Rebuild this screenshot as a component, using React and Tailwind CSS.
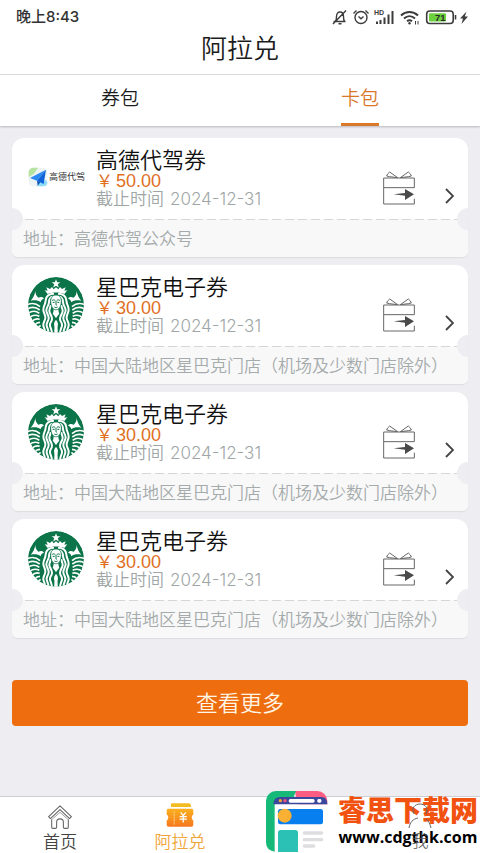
import { useState } from "react";

const tabs = ["券包", "卡包"];

const cards = [
  { id: 1, brand: "amap", title: "高德代驾券", price: "50.00", date: "2024-12-31", address: "高德代驾公众号" },
  { id: 2, brand: "siren", title: "星巴克电子券", price: "30.00", date: "2024-12-31", address: "中国大陆地区星巴克门店（机场及少数门店除外）" },
  { id: 3, brand: "siren", title: "星巴克电子券", price: "30.00", date: "2024-12-31", address: "中国大陆地区星巴克门店（机场及少数门店除外）" },
  { id: 4, brand: "siren", title: "星巴克电子券", price: "30.00", date: "2024-12-31", address: "中国大陆地区星巴克门店（机场及少数门店除外）" },
];

function StatusIcons() {
  return (
    <svg viewBox="0 0 138 20" className="w-[138px] h-5" fill="none" stroke="#3c3c3c" strokeWidth="1.4">
      {/* muted bell */}
      <path d="M1.500 14.500h12M3.500 14.300c1-1.200 1-2.500 1-4.800 0-3 1.500-4.500 3.500-4.500s3.500 1.500 3.500 4.500c0 2.300 0 3.600 1 4.800M6.500 16.800h3M14 3.500 1 17" />
      {/* alarm */}
      <circle cx="29" cy="10.500" r="6" />
      <path d="M26.500 9.500 29 11.800l2.500-2.300M21.500 6.500l3-3M36.500 6.500l-3-3" />
      {/* signal */}
      <g strokeWidth="2">
        <path d="M45 17v-2.500M48.500 17v-4M52.500 17v-6.500M56.500 17V7.500M60.500 17V4" />
      </g>
      <text x="42" y="8" fontSize="7" fontWeight="700" fill="#3c3c3c" stroke="none" className="font-['Liberation_Sans',sans-serif]">
        HD
      </text>
      {/* wifi */}
      <g strokeWidth="2">
        <path d="M69 8.500c5-4.600 12-4.600 17 0M72 11.500c3.300-3 7.700-3 11 0M75 14.200c1.600-1.300 3.400-1.300 5 0" />
      </g>
      <circle cx="77.500" cy="16.300" r="1.200" fill="#3c3c3c" stroke="none" />
      <path d="M83.500 14v3.500M86 14v3.500" strokeWidth="1" />
      {/* battery */}
      <rect x="94.700" y="4" width="26.500" height="12.500" rx="3" strokeWidth="1.600" />
      <rect x="97" y="6.200" width="17" height="8.200" rx="1" fill="#6bd13c" stroke="none" />
      <path d="M123.500 8v4.500" strokeWidth="1.600" />
      <text x="103" y="13.600" fontSize="9.500" fontWeight="700" fill="#2c2c2c" stroke="none" className="font-['Liberation_Sans',sans-serif]">
        71
      </text>
      <path d="M134.500 4.500 128 11.500h3L129.500 17l6.500-7.500h-3.200z" fill="#3c3c3c" stroke="none" />
    </svg>
  );
}

function AmapLogo() {
  return (
    <div className="flex items-center gap-px pb-1">
      <svg viewBox="0 0 60 60" className="w-5 h-5 shrink-0">
        <rect x="2" y="2" width="56" height="56" rx="14" fill="#eef3f5" />
        <path d="M2 30V16A14 14 0 0 1 16 2h14L18 20z" fill="#b5e3a0" />
        <path d="M28 58l4-14 22-4 4 6a12 12 0 0 1-12 12z" fill="#8fdcf7" />
        <path d="M54 8 6 33l21 8z" fill="#2b8bf2" />
        <path d="M54 8 27 41l20 10z" fill="#0f62d8" />
        <path d="M27 41l2 15 8-10z" fill="#0a4fb4" />
      </svg>
      <span className="text-[9px] leading-3 whitespace-nowrap text-[#333]">高德代驾</span>
    </div>
  );
}

function SirenHalf() {
  return (
    <g>
      {/* tail fin */}
      <path d="M22 42c0 9 3 15 9 20 8-3 14-2 17 3-6 1-9 5-10 11-8-6-16-7-30-5C16 63 20 54 22 42z" />
      {/* tail scales */}
      <g fill="none" stroke="#fff" strokeWidth="5">
        <path d="M-2 83c16-7 27-4 38 6" />
        <path d="M-2 96c14-8 26-6 37 3" />
        <path d="M0 109c12-8 24-8 34 0" />
        <path d="M5 121c10-8 19-8 29-3" />
        <path d="M12 133c8-8 14-9 23-6" />
        <path d="M20 144c5-6 9-8 16-8" />
        <path d="M29 153c3-4 5-6 9-7" />
      </g>
      {/* hair */}
      <g fill="none" stroke="#fff" strokeWidth="6">
        <path d="M78 50C60 50 54 58 53 70c0 12-7 17-7 28 0 10 7 15 6 25s-7 13-6 22 5 10 6 25" />
        <path d="M74 58c-8 3-11 8-11 17 0 11-8 15-8 25s8 14 7 24-7 12-6 21 5 10 6 25" />
        <path d="M68 84c0 8-4 11-4 18 0 9 8 13 8 23s-7 11-6 20 5 10 6 25" />
      </g>
    </g>
  );
}

function SirenLogo() {
  return (
    <svg viewBox="0 0 168 168" className="mb-0.5 w-14 h-14">
      <clipPath id="siren-clip">
        <circle cx="84" cy="84" r="84" />
      </clipPath>
      <g clipPath="url(#siren-clip)" fill="#fff">
        <circle cx="84" cy="84" r="84" fill="#0b7449" />
        <path d="M84 7l3.500 9H97l-7.500 6 3 9.500-8.500-5.500-8.500 5.500 3-9.500-7.500-6h9.500z" />
        <path d="M84 31l7 6 5-7 6 6 11-5-4 10 9-1-9 11c-16-6-34-6-50 0l-9-11 9 1-4-10 11 5 6-6 5 7z" />
        <SirenHalf />
        <g transform="translate(168 0) scale(-1 1)">
          <SirenHalf />
        </g>
        <path d="M84 54c11 0 16 7 16 19 0 14-7 26-16 26s-16-12-16-26c0-12 5-19 16-19z" stroke="#0b7449" strokeWidth="2.500" />
        <path d="M77 97c4 4 10 4 14 0 0 7 2 10 3 14-4 3-7 8-10 13-3-5-6-10-10-13 1-4 3-7 3-14z" />
        <path d="M84 128c6 7 7 13 5 20-1 8 1 13 0 20H79c-1-7 1-12 0-20-2-7-1-13 5-20z" />
        <g fill="none" stroke="#0b7449" strokeWidth="3">
          <path d="M72 71c3-3 6-3 9-1M87 70c3-2 6-2 9 1M74 76h6M88 76h6M84 70v11c-1 3 0 3 3 3M79 90c3 2 7 2 10 0" />
        </g>
      </g>
    </svg>
  );
}

function GiftIcon() {
  return (
    <svg viewBox="0 0 96 102" className="w-8 h-[34px]" fill="none" stroke="#666" strokeWidth="3">
      <path d="M2 21h92v29H2zM2 50v49h92V83" />
      <path d="M44 20 20 3q-8 6-9 12l8 2zM52 20 76 3q8 6 9 12l-8 2z" strokeWidth="3" strokeLinejoin="round" />
      <path d="M32 70l34-4V54l27 16-27 17V74z" fill="#4a4a4a" stroke="none" />
    </svg>
  );
}

function CouponCard({ card }) {
  return (
    <li className="relative overflow-hidden rounded-t-xl rounded-b-md bg-white shadow-[0_1px_1px_#dcdcdf]">
      <div className="flex h-[81px] pl-4 pr-3.5">
        <div className="flex w-[68px] shrink-0 items-center">
          {card.brand === "amap" ? <AmapLogo /> : <SirenLogo />}
        </div>
        <div className="min-w-0 flex-1 pt-2.5">
          <h2 className="text-[22px] leading-6 font-[350] text-[#111]">{card.title}</h2>
          <p className="flex leading-[18px] text-[#e0701f]">
            <span className="w-5 text-[17px]">￥</span>
            <span className="font-['Liberation_Sans',sans-serif] text-lg leading-[18px]">{card.price}</span>
          </p>
          <p className="flex gap-1.5 text-[17px] leading-[18px] text-[#a0a6a6]">
            <span className="font-[350]">截止时间</span>
            <time className="font-light">{card.date}</time>
          </p>
        </div>
        <div className="flex items-end gap-[30px] pb-3.5">
          <button type="button" aria-label="赠送">
            <GiftIcon />
          </button>
          <button type="button" aria-label="详情">
            <svg viewBox="0 0 9 18" className="w-[9px] h-[18px]" fill="none" stroke="#444" strokeWidth="1.800">
              <path d="M1 2l7 7-7 7" />
            </svg>
          </button>
        </div>
      </div>
      <div className="h-px bg-[repeating-linear-gradient(90deg,#d6d6d8_0_9px,#f8f8f9_9px_13px)]" />
      <p className="h-[37px] bg-[#f8f8f9] pl-[11px] text-[17px] leading-[38px] font-[350] whitespace-nowrap text-[#a5abab]">
        地址：{card.address}
      </p>
      <span className="absolute -left-[11px] top-[70px] h-[22px] w-[22px] rounded-full bg-[#eeedf2]" />
      <span className="absolute -right-[11px] top-[70px] h-[22px] w-[22px] rounded-full bg-[#eeedf2]" />
    </li>
  );
}

function HomeIcon() {
  return (
    <svg viewBox="0 0 78 78" className="h-6 w-6" fill="none" stroke="#666" strokeWidth="3.500" strokeLinejoin="round">
      <path d="M39 3 2 38l6 6 31-29 31 29 6-6z" />
      <path d="M12 46v26q0 4 4 4h8q4 0 4-4V56q0-11 11-11t11 11v16q0 4 4 4h8q4 0 4-4V46" />
      <path d="M39 24 14 46M39 24l25 22" strokeWidth="2" />
    </svg>
  );
}

function TicketIcon() {
  return (
    <svg viewBox="0 0 84 74" className="h-6 w-7">
      <defs>
        <linearGradient id="ticket" x1="0" y1="0" x2="0" y2="1">
          <stop offset="0" stopColor="#fbb01e" />
          <stop offset="1" stopColor="#f5791f" />
        </linearGradient>
      </defs>
      <path d="M18 1h50q8 0 8 8v3H14V5q0-4 4-4z" fill="#f3bd22" />
      <path d="M6 18h72q5 0 5 5v13q-5 2-5 9t5 9v13q0 6-6 6H7q-6 0-6-6V54q5-2 5-9t-5-9V23q0-5 5-5z" fill="url(#ticket)" />
      <path d="M24 26v42" stroke="#ffe3a6" strokeWidth="2.500" strokeDasharray="6 2" />
      <path d="M44 29l8 10 8-10M52 39v21M41 42h22M41 50h22" stroke="#fff" strokeWidth="4" fill="none" />
    </svg>
  );
}

function PersonIcon() {
  return (
    <svg viewBox="0 0 24 26" className="h-[26px] w-6" fill="none" stroke="#666" strokeWidth="1">
      <path d="M6 11C3 5 7 1 12 1s9 4 6 10M1 25c1-6 4-9 9-10M23 25c-1-4-2-7-5-9" />
    </svg>
  );
}

function SiteMark() {
  return (
    <div className="absolute right-0 bottom-0 flex items-end gap-2.5 pr-0.5">
      <svg viewBox="0 0 186 186" className="h-[62px] w-[62px]">
        <path d="M22 186V40h162v124q0 22-22 22z" fill="#fff" />
        <path d="M86 0h68a30 30 0 0 1 30 30v10H96z" fill="#fb5d82" />
        <path d="M0 30A30 30 0 0 1 30 0h60l-8 20L26 40v142Q0 178 0 154z" fill="#17b978" />
        <path d="M22 40q0-22 22-22h122q18 0 18 22z" fill="#39489c" />
        <circle cx="43" cy="29" r="5" fill="#f3a52d" />
        <circle cx="57" cy="29" r="5" fill="#f0557d" />
        <rect x="68" y="24" width="78" height="11" rx="5" fill="#fff" />
        <rect x="154" y="24" width="12" height="11" rx="4" fill="#fff" />
        <rect x="36" y="54" width="135" height="46" rx="7" fill="#087fee" />
        <circle cx="56" cy="74" r="21" fill="#fab033" />
        <path d="M44 117h44q8 0 8 8v58H36v-58q0-8 8-8z" fill="#2cc1b5" />
        <path d="M115 126h52M115 146h52M115 165h28" stroke="#dedee0" strokeWidth="10" strokeLinecap="round" />
      </svg>
      <div className="flex flex-col items-center">
        <strong className="text-[28px] leading-8 font-black text-[#f2520f]">睿思下载网</strong>
        <span className="pb-1.5 font-['Open_Sans',sans-serif] text-base leading-5 font-bold text-black">www.cdgthk.com</span>
      </div>
    </div>
  );
}

function App() {
  const [activeTab, setActiveTab] = useState("卡包");

  return (
    <div className="flex min-h-screen flex-col bg-[#eeedf2] font-['Inter','Noto_Sans_CJK_SC',sans-serif] text-[#1c1c1c]">
      <header className="bg-white shadow-[0_1px_2px_#b8b8bc]">
        <div className="flex h-[34px] items-center justify-between pl-4 pr-2.5">
          <span className="text-[15px] font-medium text-[#333]">晚上8:43</span>
          <StatusIcons />
        </div>
        <h1 className="pb-2.5 text-center text-[26px] leading-[30px] font-[350]">阿拉兑</h1>
        <div className="grid grid-cols-2 border-t border-[#dcdce0]" role="tablist">
          {tabs.map((tab) => (
            <button
              key={tab}
              type="button"
              role="tab"
              aria-selected={activeTab === tab}
              onClick={() => setActiveTab(tab)}
              className="flex justify-center"
            >
              <span
                className={`flex h-[51px] items-center border-b-[3px] text-[19px] font-[350] ${
                  activeTab === tab ? "border-[#d9772b] text-[#d9772b]" : "border-transparent"
                }`}
              >
                {tab}
              </span>
            </button>
          ))}
        </div>
      </header>

      <main className="flex-1 px-3 pt-3 pb-4">
        <ul className="flex flex-col gap-2">
          {cards.map((card) => (
            <CouponCard key={card.id} card={card} />
          ))}
        </ul>
        <button type="button" className="mt-[42px] h-[46px] w-full rounded bg-[#ee6d0f] text-[22px] font-[350] text-[#fff6e6]">
          查看更多
        </button>
      </main>

      <nav className="relative border-t border-[#cfcfd3] bg-white">
        <SiteMark />
        <div className="grid h-14 grid-cols-4 text-[17px] leading-5">
          <a href="#home" className="flex flex-col items-center gap-[3px] pt-2 font-[350] text-[#444]">
            <HomeIcon />
            <span>首页</span>
          </a>
          <a href="#exchange" className="flex flex-col items-center gap-[5px] pt-1.5 font-[350] text-[#f0a53a]">
            <TicketIcon />
            <span>阿拉兑</span>
          </a>
          <a href="#me" className="relative col-start-4 flex flex-col items-center gap-0.5 pt-1.5 font-light text-[#555]">
            <PersonIcon />
            <span>我</span>
          </a>
        </div>
      </nav>
    </div>
  );
}

export default App;
